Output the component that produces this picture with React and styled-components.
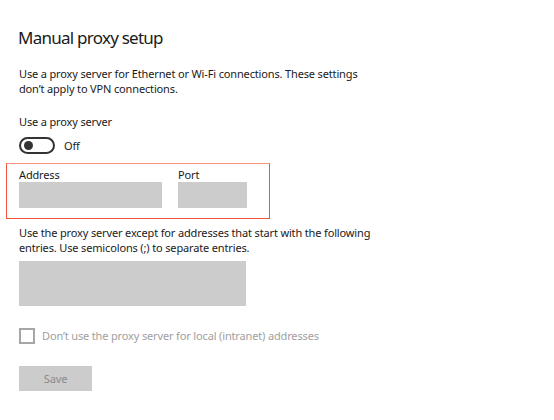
import React, { useState } from "react";
import styled, { createGlobalStyle } from "styled-components";

const GlobalStyle = createGlobalStyle`
  body {
    margin: 0;
    background: #ffffff;
    font-family: "Noto Sans", "Open Sans", sans-serif;
    color: #1a1a1a;
  }
`;

function ProxySetup() {
  const [enabled, setEnabled] = useState(false);

  return (
    <Page>
      <Title>Manual proxy setup</Title>
      <Description>
        Use a proxy server for Ethernet or Wi-Fi connections. These settings
        <br />
        don’t apply to VPN connections.
      </Description>

      <SettingLabel>Use a proxy server</SettingLabel>
      <ToggleRow>
        <Toggle on={enabled} onClick={() => setEnabled(!enabled)}>
          <Knob on={enabled} />
        </Toggle>
        <ToggleText>{enabled ? "On" : "Off"}</ToggleText>
      </ToggleRow>

      <HighlightBox>
        <Field>
          <FieldLabel>Address</FieldLabel>
          <GreyInput width={143} />
        </Field>
        <Field>
          <FieldLabel>Port</FieldLabel>
          <GreyInput width={69} />
        </Field>
      </HighlightBox>

      <ExceptText>
        Use the proxy server except for addresses that start with the following
        <br />
        entries. Use semicolons (;) to separate entries.
      </ExceptText>
      <GreyArea />

      <CheckRow>
        <CheckBox />
        <CheckText>Don’t use the proxy server for local (intranet) addresses</CheckText>
      </CheckRow>

      <SaveButton disabled>Save</SaveButton>
    </Page>
  );
}

const Page = styled.div`
  padding: 26px 0 0 19px;
  width: 554px;
  height: 420px;
  box-sizing: border-box;
  font-size: 11px;
  letter-spacing: -0.15px;
`;

const Title = styled.h1`
  margin: 0 0 0 -1px;
  font-size: 17px;
  font-weight: 400;
  line-height: 24px;
  letter-spacing: -0.75px;
`;

const Description = styled.p`
  margin: 16px 0 0;
  line-height: 15px;
`;

const SettingLabel = styled.div`
  margin-top: 18px;
  line-height: 16px;
`;

const ToggleRow = styled.div`
  display: flex;
  align-items: center;
  margin-top: 7px;
  height: 17px;
`;

const Toggle = styled.div`
  width: 36px;
  height: 17px;
  box-sizing: border-box;
  border: 2px solid #333;
  border-radius: 9px;
  background: ${(p) => (p.on ? "#0078d7" : "#fff")};
  display: flex;
  align-items: center;
  padding: 0 3px;
  justify-content: ${(p) => (p.on ? "flex-end" : "flex-start")};
  cursor: pointer;
`;

const Knob = styled.span`
  width: 9px;
  height: 9px;
  border-radius: 50%;
  background: ${(p) => (p.on ? "#fff" : "#333")};
`;

const ToggleText = styled.span`
  margin-left: 9px;
`;

const HighlightBox = styled.div`
  margin: 9px 0 0 -13px;
  width: 264px;
  box-sizing: border-box;
  border: 1px solid #f2553a;
  border-top-color: #f7907c;
  padding: 4px 12px 10px;
  display: flex;
  gap: 16px;
`;

const Field = styled.div`
  display: flex;
  flex-direction: column;
`;

const FieldLabel = styled.div`
  line-height: 14px;
`;

const GreyInput = styled.div`
  width: ${(p) => p.width}px;
  height: 26px;
  background: #cccccc;
`;

const ExceptText = styled.p`
  margin: 6px 0 0;
  line-height: 15px;
`;

const GreyArea = styled.div`
  margin-top: 6px;
  width: 227px;
  height: 45px;
  background: #cccccc;
`;

const CheckRow = styled.div`
  display: flex;
  align-items: center;
  margin-top: 21px;
  height: 17px;
`;

const CheckBox = styled.span`
  width: 16px;
  height: 16px;
  box-sizing: border-box;
  border: 2px solid #a6a6a6;
`;

const CheckText = styled.span`
  margin-left: 7px;
  color: #a0a0a0;
`;

const SaveButton = styled.button`
  display: block;
  margin-top: 22px;
  width: 73px;
  height: 25px;
  border: none;
  background: #cccccc;
  color: #8a8a8a;
  font-family: inherit;
  font-size: 11px;
  letter-spacing: -0.15px;
  padding: 0;
`;

export default function App() {
  return (
    <>
      <GlobalStyle />
      <ProxySetup />
    </>
  );
}
